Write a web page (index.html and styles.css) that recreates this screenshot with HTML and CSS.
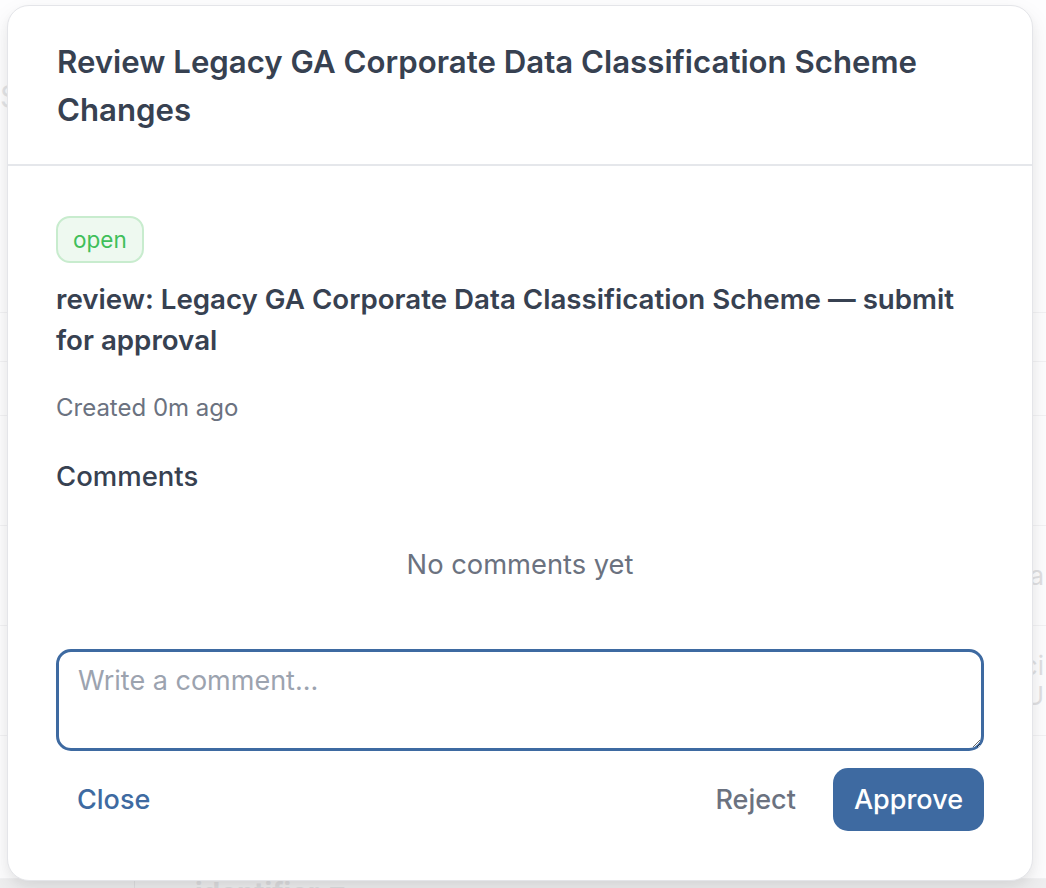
FILE: index.html
```html
<!DOCTYPE html>
<html lang="en">
<head>
<meta charset="utf-8">
<title>Review</title>
<link rel="stylesheet" href="styles.css">
</head>
<body>
<div class="page">
  <div class="page-top">
    <span class="page-letter">S</span>
  </div>
  <div class="page-row r1"></div>
  <div class="page-row r2"></div>
  <div class="page-row r3"></div>
  <div class="page-row r4"><span class="far">Data</span></div>
  <div class="page-row r5"><span class="far">Speci<br>U</span></div>
  <div class="page-row r6"></div>
  <div class="page-bottom">
    <span class="bottom-cell"></span>
    <span class="bottom-text">identifier ↗</span>
  </div>
</div>

<div class="backdrop">
  <div class="modal">
    <div class="modal-header">
      <h2 class="modal-title">Review Legacy GA Corporate Data Classification Scheme Changes</h2>
    </div>
    <div class="modal-body">
      <span class="badge">open</span>
      <p class="review-title">review: Legacy GA Corporate Data Classification Scheme — submit for approval</p>
      <p class="meta">Created 0m ago</p>
      <h3 class="comments-heading">Comments</h3>
      <p class="empty">No comments yet</p>
      <textarea class="comment-box" placeholder="Write a comment..." autofocus></textarea>
      <div class="actions">
        <button class="btn btn-link">Close</button>
        <div class="actions-right">
          <button class="btn btn-ghost">Reject</button>
          <button class="btn btn-primary">Approve</button>
        </div>
      </div>
    </div>
  </div>
</div>
</body>
</html>
```
FILE: styles.css
```css
* { box-sizing: border-box; }
html, body { margin: 0; padding: 0; }
body {
  width: 1046px;
  height: 888px;
  overflow: hidden;
  font-family: Inter, "Noto Sans", "Liberation Sans", sans-serif;
  background: #ffffff;
  position: relative;
}

/* faded page behind the dialog */
.page {
  width: 1046px;
  height: 888px;
  display: flex;
  flex-direction: column;
  background: #fcfcfd;
  color: #d4d5d8;
}
.page-top {
  height: 313px;
  border-bottom: 1px solid #ececee;
  padding: 78px 0 0 0;
}
.page-letter {
  font-size: 30px;
  line-height: 36px;
  margin-left: 0;
  color: #d6d7da;
}
.page-row { border-bottom: 1px solid #ececee; display: flex; justify-content: flex-end; }
.r1 { height: 49px; }
.r2 { height: 54px; }
.r3 { height: 110px; }
.r4 { height: 100px; align-items: center; }
.r5 { height: 110px; align-items: center; }
.r6 { flex: 1; }
.far {
  font-size: 26px;
  line-height: 30px;
  margin-right: 2px;
  text-align: right;
  color: #cfd0d3;
}
.page-bottom {
  height: 9px;
  background: #e6e6e8;
  display: flex;
  align-items: flex-start;
  overflow: hidden;
}
.bottom-cell {
  width: 135px;
  height: 9px;
  border-right: 1px solid #d2d2d5;
}
.bottom-text {
  margin-left: 60px;
  font-size: 28px;
  font-weight: 700;
  line-height: 28px;
  color: #cdcdd0;
}

/* dialog */
.backdrop {
  position: absolute;
  inset: 0;
  background: rgba(255, 255, 255, 0.35);
}
.modal {
  position: absolute;
  left: 7px;
  top: 5px;
  width: 1026px;
  height: 876px;
  background: #ffffff;
  border: 1px solid #e4e5e9;
  border-radius: 22px;
  box-shadow: 0 10px 25px rgba(0, 0, 0, 0.08), 0 4px 10px rgba(0, 0, 0, 0.04);
  display: flex;
  flex-direction: column;
}
.modal-header {
  padding: 32px 49px 30px 49px;
  border-bottom: 2px solid #e5e7eb;
}
.modal-title {
  margin: 0;
  font-size: 31.2px;
  line-height: 48px;
  font-weight: 600;
  color: #374151;
}
.modal-body {
  padding: 50px 48px 0 48px;
  display: flex;
  flex-direction: column;
  align-items: flex-start;
}
.badge {
  display: inline-block;
  height: 47px;
  padding: 0 15px;
  line-height: 43px;
  font-size: 22.5px;
  color: #3fbf5a;
  background: #eef9f0;
  border: 2px solid #c8ecce;
  border-radius: 14px;
}
.review-title {
  margin: 16px 0 0 0;
  font-size: 27.7px;
  line-height: 41px;
  font-weight: 600;
  color: #374151;
}
.meta {
  margin: 29px 0 0 0;
  font-size: 24px;
  line-height: 36px;
  color: #6b7280;
}
.comments-heading {
  margin: 30px 0 0 0;
  font-size: 27.5px;
  line-height: 40px;
  font-weight: 500;
  color: #374151;
}
.empty {
  margin: 49px 0 0 0;
  width: 100%;
  text-align: center;
  font-size: 27.3px;
  line-height: 40px;
  color: #6b7280;
}
.comment-box {
  margin-top: 64px;
  width: 928px;
  height: 102px;
  border: 3px solid #3e6aa1;
  border-radius: 15px;
  padding: 9px 19px;
  font-family: inherit;
  font-size: 27px;
  line-height: 40px;
  color: #374151;
  outline: none;
  resize: vertical;
}
.comment-box::placeholder { color: #9ca3af; }
.actions {
  margin-top: 17px;
  width: 928px;
  display: flex;
  justify-content: space-between;
  align-items: center;
}
.actions-right {
  display: flex;
  gap: 16px;
  align-items: center;
}
.btn {
  font-family: inherit;
  font-size: 27px;
  line-height: 40px;
  border: none;
  background: none;
  padding: 12px 21px 11px 21px;
  border-radius: 15px;
  cursor: pointer;
}
.btn-link { color: #3e6aa1; font-weight: 500; }
.btn-ghost { color: #6b7280; font-weight: 500; }
.btn-primary {
  background: #3e6aa1;
  color: #ffffff;
  font-weight: 500;
}
```
